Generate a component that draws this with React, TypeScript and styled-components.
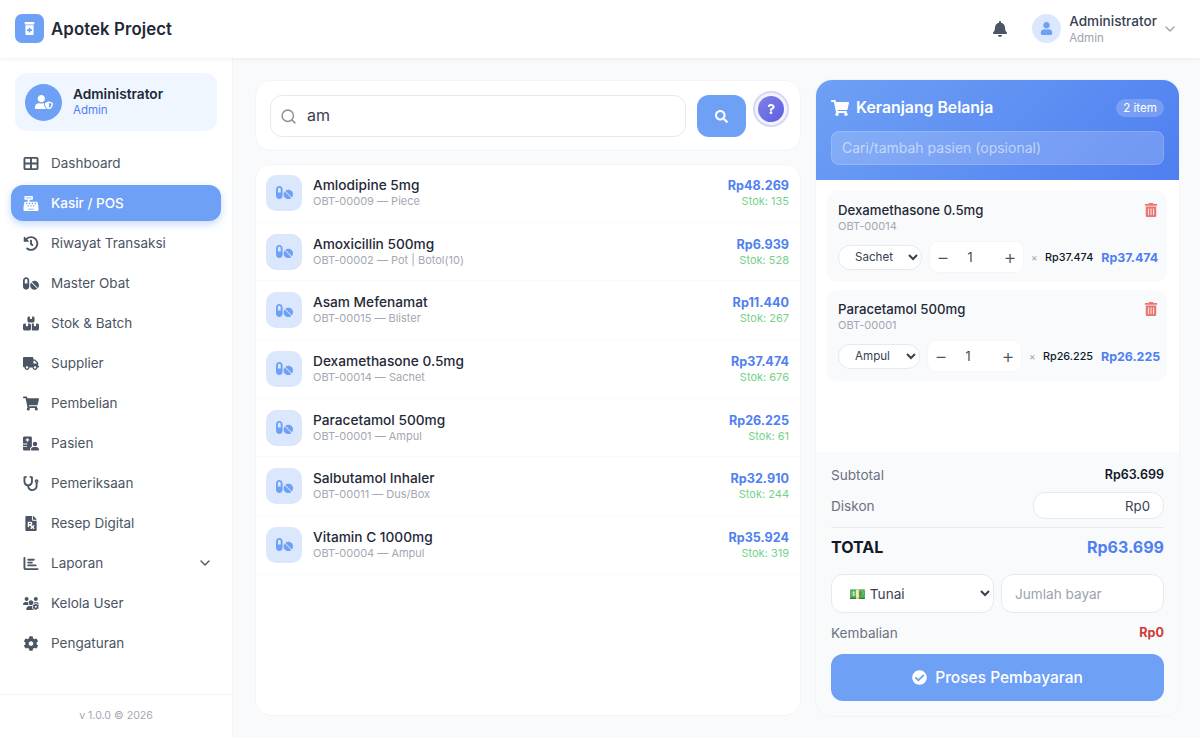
import React from "react";
import styled, { createGlobalStyle } from "styled-components";
import {
  FaBell,
  FaCashRegister,
  FaCheckCircle,
  FaCog,
  FaFilePrescription,
  FaHistory,
  FaPills,
  FaPrescriptionBottleAlt,
  FaQuestion,
  FaSearch,
  FaShoppingCart,
  FaStethoscope,
  FaTrashAlt,
  FaTruck,
  FaUser,
  FaUserShield,
} from "react-icons/fa";
import { FaBoxesStacked, FaChartBar, FaHospitalUser, FaTableCellsLarge, FaUsersGear } from "react-icons/fa6";
import { ChevronDown, Search } from "lucide-react";

const font = `"Inter", "Noto Sans", sans-serif`;

const GlobalStyle = createGlobalStyle`
  html, body {
    margin: 0;
    height: 100%;
    background: #f8fafc;
    font-family: ${font};
    color: #1f2937;
    overflow: hidden;
  }
  * { box-sizing: border-box; }
`;

const Page = styled.div`
  width: 1200px;
  height: 738px;
  display: flex;
  flex-direction: column;
`;
const Header = styled.header`
  height: 58px;
  flex: none;
  background: #fff;
  display: flex;
  align-items: center;
  padding: 0 22px 1px 15px;
  box-shadow: 0 1px 4px rgba(15, 23, 42, 0.07);
  position: relative;
`;
const LogoBox = styled.div`
  width: 29px;
  height: 29px;
  border-radius: 7px;
  background: #6ea0f5;
  color: #fff;
  font-size: 13px;
  display: flex;
  align-items: center;
  justify-content: center;
`;
const Brand = styled.div`
  margin-left: 7px;
  font-size: 16.8px;
  font-weight: 600;
  color: #1f2937;
  letter-spacing: 0.1px;
`;
const HeaderRight = styled.div`
  margin-left: auto;
  display: flex;
  align-items: center;
  color: #6b7280;
`;
const Bell = styled.div`
  font-size: 16px;
  color: #4b5563;
  display: flex;
  margin-right: 24px;
`;
const HeaderAvatar = styled.div`
  width: 29px;
  height: 29px;
  border-radius: 50%;
  background: #dbe7fd;
  color: #6ea0f5;
  font-size: 13px;
  display: flex;
  align-items: center;
  justify-content: center;
  margin-right: 8px;
`;
const HeaderUser = styled.div`
  display: flex;
  flex-direction: column;
  padding-top: 2px;
  margin-right: 5px;
`;
const HeaderName = styled.div`
  font-size: 13.6px;
  font-weight: 500;
  line-height: 17px;
  color: #374151;
`;
const HeaderRole = styled.div`
  font-size: 11.5px;
  line-height: 15px;
  margin-top: 1px;
  color: #9ca3af;
`;
const Body = styled.div`
  flex: 1;
  min-height: 0;
  display: flex;
`;
const Sidebar = styled.aside`
  width: 233px;
  flex: none;
  background: #fff;
  border-right: 1px solid #f1f5f9;
  display: flex;
  flex-direction: column;
`;
const UserCard = styled.div`
  margin: 15px 15px 0;
  height: 58px;
  border-radius: 12px;
  background: #eff6ff;
  display: flex;
  align-items: center;
  padding-left: 10px;
  gap: 11px;
`;
const UserAvatar = styled.div`
  width: 37px;
  height: 37px;
  border-radius: 50%;
  background: #6ea0f5;
  color: #fff;
  display: flex;
  align-items: center;
  justify-content: center;
  svg {
    width: 18px;
    height: 14.5px;
  }
`;
const UserName = styled.div`
  font-size: 13.7px;
  font-weight: 600;
  line-height: 17px;
  color: #1f2937;
`;
const UserRole = styled.div`
  font-size: 11.5px;
  line-height: 15px;
  color: #4f7ff0;
`;
const Nav = styled.nav`
  flex: 1;
  padding: 14px 11px 0;
  display: flex;
  flex-direction: column;
  gap: 4px;
`;
const NavItem = styled.a<{ $active?: boolean }>`
  height: 36px;
  flex: none;
  border-radius: 12px;
  display: flex;
  align-items: center;
  padding: 0 8px 0 12px;
  font-size: 13.5px;
  font-weight: ${(p) => (p.$active ? 500 : 400)};
  color: ${(p) => (p.$active ? "#fff" : "#4b5563")};
  background: ${(p) => (p.$active ? "#6ea0f5" : "transparent")};
  box-shadow: ${(p) => (p.$active ? "0 3px 8px rgba(110, 160, 245, 0.4)" : "none")};
`;
const NavIcon = styled.span`
  width: 16px;
  height: 16px;
  margin-right: 12px;
  display: flex;
  align-items: center;
  justify-content: center;
  svg {
    flex: none;
    width: 16px;
    height: 15px;
  }
`;
const NavChevron = styled.span`
  margin-left: auto;
  display: flex;
`;
const SideFooter = styled.div`
  height: 44px;
  flex: none;
  border-top: 1px solid #f3f4f6;
  padding-bottom: 2px;
  display: flex;
  align-items: center;
  justify-content: center;
  font-size: 10.6px;
  color: #a3a8b1;
`;
const Content = styled.main`
  flex: 1;
  min-width: 0;
  display: flex;
  gap: 15px;
  padding: 22px 21px 22px 22px;
`;
const LeftColumn = styled.div`
  width: 546px;
  flex: none;
  display: flex;
  flex-direction: column;
  gap: 13px;
`;
const SearchPanel = styled.div`
  position: relative;
  height: 71px;
  flex: none;
  background: #fff;
  border: 1px solid #f1f5f9;
  border-radius: 16px;
  padding: 14px;
  display: flex;
  gap: 11px;
`;
const SearchField = styled.div`
  width: 416px;
  height: 42px;
  border: 1px solid #e5e9f2;
  border-radius: 12px;
  display: flex;
  align-items: center;
  padding-left: 9px;
  gap: 10px;
  color: #8d939c;
`;
const SearchInput = styled.input`
  flex: 1;
  min-width: 0;
  border: 0;
  outline: 0;
  background: transparent;
  padding: 0 0 2px;
  font: 400 16px ${font};
  color: #374151;
`;
const SearchButton = styled.button`
  width: 49px;
  height: 42px;
  border: 0;
  border-radius: 12px;
  background: #6ea0f5;
  color: #fff;
  font-size: 13px;
  display: flex;
  align-items: center;
  justify-content: center;
`;
const HelpBubble = styled.div`
  position: absolute;
  left: 502px;
  top: 15px;
  width: 26px;
  height: 26px;
  border-radius: 50%;
  background: linear-gradient(135deg, #8180ea, #5b5fe0);
  color: #fff;
  font-size: 10px;
  display: flex;
  align-items: center;
  justify-content: center;
  box-shadow: 0 0 0 3px #f3f4fe, 0 0 0 5px #d6d7f8;
`;
const ProductList = styled.div`
  flex: 1;
  min-height: 0;
  background: #fff;
  box-shadow: inset 0 0 0 1px #f1f5f9;
  border-radius: 16px;
`;
const ProductRow = styled.div`
  height: 58.7px;
  display: flex;
  align-items: center;
  padding: 0 12px 0 11px;
  border-bottom: 1px solid #f8fafc;
`;
const ProductIcon = styled.div`
  width: 36px;
  height: 36px;
  border-radius: 10px;
  background: #dbe7fd;
  color: #6ea0f5;
  display: flex;
  align-items: center;
  justify-content: center;
  margin-right: 11px;
  svg {
    flex: none;
    width: 17px;
    height: 17px;
  }
`;
const ProductInfo = styled.div`
  flex: 1;
  min-width: 0;
`;
const ProductName = styled.div`
  font-size: 13.7px;
  font-weight: 500;
  line-height: 17px;
  color: #1f2937;
`;
const ProductMeta = styled.div`
  font-size: 11px;
  line-height: 15px;
  color: #a3a8b1;
`;
const ProductPrice = styled.div`
  font-size: 12.6px;
  font-weight: 700;
  line-height: 17px;
  text-align: right;
  color: #4f7ff0;
`;
const ProductStock = styled.div`
  font-size: 11px;
  line-height: 15px;
  text-align: right;
  color: #72d28a;
`;
const Cart = styled.section`
  width: 363px;
  flex: none;
  box-shadow: 0 0 0 1px #f1f5f9;
  border-radius: 16px;
  overflow: hidden;
  background: #fff;
  display: flex;
  flex-direction: column;
`;
const CartHeader = styled.div`
  height: 100px;
  flex: none;
  padding: 19px 15px 0;
  color: #fff;
  background: linear-gradient(135deg, #6ea0f5, #4f7ff0);
`;
const CartTitleRow = styled.div`
  height: 17px;
  display: flex;
  align-items: center;
  gap: 7px;
`;
const CartTitle = styled.div`
  font-size: 15.8px;
  font-weight: 600;
`;
const CountBadge = styled.span`
  margin-left: auto;
  height: 18px;
  width: 48px;
  border-radius: 9px;
  background: rgba(255, 255, 255, 0.2);
  font-size: 11.6px;
  display: flex;
  align-items: center;
  justify-content: center;
`;
const PatientInput = styled.input`
  display: block;
  width: 100%;
  height: 34px;
  margin-top: 15px;
  border: 1px solid rgba(255, 255, 255, 0.15);
  border-radius: 8px;
  background: rgba(255, 255, 255, 0.18);
  padding: 0 10px 1px;
  font: 400 14px ${font};
  outline: 0;
  &::placeholder {
    color: rgba(255, 255, 255, 0.55);
  }
`;
const CartItems = styled.div`
  flex: 1;
  min-height: 0;
  padding: 11px 12px 0 11px;
  display: flex;
  flex-direction: column;
  gap: 8px;
`;
const CartItem = styled.div`
  height: 91px;
  flex: none;
  background: #f8fafc;
  border-radius: 10px;
  padding: 11px 7px 0 11px;
`;
const ItemTop = styled.div`
  display: flex;
  justify-content: space-between;
  height: 40px;
`;
const ItemName = styled.div`
  font-size: 13.2px;
  font-weight: 500;
  line-height: 17px;
  color: #1f2937;
`;
const ItemCode = styled.div`
  font-size: 11px;
  line-height: 15px;
  color: #a3a8b1;
`;
const TrashButton = styled.span`
  color: #ea7672;
  font-size: 14px;
  margin: 1px 2px 0 0;
`;
const ItemControls = styled.div`
  display: flex;
  align-items: center;
  gap: 8px;
  height: 30px;
`;
const UnitSelect = styled.select<{ $w: number }>`
  width: ${(p) => p.$w}px;
  height: 25px;
  flex: none;
  border: 1px solid #e5e9f2;
  border-radius: 12px;
  background: #fff;
  padding-left: 12px;
  font: 400 11.6px ${font};
  color: #374151;
  outline: 0;
`;
const Stepper = styled.div`
  width: 93px;
  height: 30px;
  flex: none;
  background: #fff;
  border-radius: 8px;
  box-shadow: 0 0 0 1px #f5f6f9;
  display: flex;
  align-items: center;
`;
const StepButton = styled.button`
  width: 26px;
  height: 30px;
  border: 0;
  background: transparent;
  padding: 0;
  font: 300 20px ${font};
  color: #4b5563;
`;
const StepValue = styled.span`
  flex: 1;
  padding-right: 13px;
  text-align: center;
  font-size: 12.5px;
  color: #374151;
`;
const Times = styled.span`
  font-size: 10px;
  color: #9ca3af;
  width: 6px;
  flex: none;
`;
const UnitPrice = styled.span`
  font-size: 10.8px;
  font-weight: 500;
  color: #111827;
  flex: none;
`;
const LineTotal = styled.span`
  font-size: 12.4px;
  font-weight: 700;
  color: #4f7ff0;
  flex: none;
`;
const Summary = styled.div`
  height: 264px;
  flex: none;
  background: #f8fafc;
  padding: 11px 15px 0;
`;
const SummaryRow = styled.div`
  display: flex;
  align-items: center;
  justify-content: space-between;
  height: 23px;
`;
const DiscountRow = styled(SummaryRow)`
  height: 27px;
  margin-top: 6px;
`;
const SummaryLabel = styled.span`
  font-size: 13.6px;
  color: #6b7280;
`;
const SummaryValue = styled.span`
  font-size: 12.5px;
  font-weight: 600;
  color: #111827;
`;
const DiscountInput = styled.input`
  width: 131px;
  height: 27px;
  border: 1px solid #e5e9f2;
  border-radius: 12px;
  background: #fff;
  padding: 0 13px;
  text-align: right;
  font: 400 13.2px ${font};
  color: #374151;
  outline: 0;
`;
const TotalRow = styled.div`
  margin-top: 8px;
  height: 39px;
  border-top: 1px solid #e7eaf0;
  display: flex;
  align-items: center;
  justify-content: space-between;
`;
const TotalLabel = styled.span`
  font-size: 16px;
  font-weight: 700;
  color: #111827;
`;
const TotalValue = styled.span`
  font-size: 16px;
  font-weight: 700;
  color: #4f7ff0;
`;
const PayRow = styled.div`
  display: flex;
  gap: 7px;
  margin-top: 8px;
`;
const PaySelect = styled.select`
  width: 163px;
  height: 39px;
  border: 1px solid #e5e9f2;
  border-radius: 12px;
  background: #fff;
  padding-left: 13px;
  font: 400 13.6px ${font};
  color: #374151;
  outline: 0;
`;
const PayInput = styled.input`
  width: 163px;
  height: 39px;
  border: 1px solid #e5e9f2;
  border-radius: 12px;
  background: #fff;
  padding: 0 13px;
  font: 400 13.6px ${font};
  outline: 0;
  &::placeholder {
    color: #9ca3af;
  }
`;
const ChangeRow = styled(SummaryRow)`
  margin-top: 8px;
`;
const ChangeValue = styled.span`
  font-size: 12.6px;
  font-weight: 700;
  color: #cf3a32;
`;
const PayButton = styled.button`
  width: 100%;
  height: 47px;
  margin-top: 10px;
  border: 0;
  border-radius: 12px;
  background: #6ea0f5;
  color: #fff;
  font: 500 15.5px ${font};
  display: flex;
  align-items: center;
  justify-content: center;
  gap: 8px;
`;

const navItems = [
  { label: "Dashboard", icon: <FaTableCellsLarge /> },
  { label: "Kasir / POS", icon: <FaCashRegister />, active: true },
  { label: "Riwayat Transaksi", icon: <FaHistory /> },
  { label: "Master Obat", icon: <FaPills /> },
  { label: "Stok & Batch", icon: <FaBoxesStacked /> },
  { label: "Supplier", icon: <FaTruck /> },
  { label: "Pembelian", icon: <FaShoppingCart /> },
  { label: "Pasien", icon: <FaHospitalUser /> },
  { label: "Pemeriksaan", icon: <FaStethoscope /> },
  { label: "Resep Digital", icon: <FaFilePrescription /> },
  { label: "Laporan", icon: <FaChartBar />, more: true },
  { label: "Kelola User", icon: <FaUsersGear /> },
  { label: "Pengaturan", icon: <FaCog /> },
];

const products = [
  { name: "Amlodipine 5mg", meta: "OBT-00009 — Piece", price: "Rp48.269", stock: 135 },
  { name: "Amoxicillin 500mg", meta: "OBT-00002 — Pot | Botol(10)", price: "Rp6.939", stock: 528 },
  { name: "Asam Mefenamat", meta: "OBT-00015 — Blister", price: "Rp11.440", stock: 267 },
  { name: "Dexamethasone 0.5mg", meta: "OBT-00014 — Sachet", price: "Rp37.474", stock: 676 },
  { name: "Paracetamol 500mg", meta: "OBT-00001 — Ampul", price: "Rp26.225", stock: 61 },
  { name: "Salbutamol Inhaler", meta: "OBT-00011 — Dus/Box", price: "Rp32.910", stock: 244 },
  { name: "Vitamin C 1000mg", meta: "OBT-00004 — Ampul", price: "Rp35.924", stock: 319 },
];

const cartItems = [
  { name: "Dexamethasone 0.5mg", code: "OBT-00014", unit: "Sachet", width: 84, price: "Rp37.474" },
  { name: "Paracetamol 500mg", code: "OBT-00001", unit: "Ampul", width: 82, price: "Rp26.225" },
];

export default function App() {
  return (
    <Page>
      <GlobalStyle />
      <Header>
        <LogoBox>
          <FaPrescriptionBottleAlt />
        </LogoBox>
        <Brand>Apotek Project</Brand>
        <HeaderRight>
          <Bell>
            <FaBell />
          </Bell>
          <HeaderAvatar>
            <FaUser />
          </HeaderAvatar>
          <HeaderUser>
            <HeaderName>Administrator</HeaderName>
            <HeaderRole>Admin</HeaderRole>
          </HeaderUser>
          <ChevronDown size={16} color="#9ca3af" />
        </HeaderRight>
      </Header>
      <Body>
        <Sidebar>
          <UserCard>
            <UserAvatar>
              <FaUserShield />
            </UserAvatar>
            <div>
              <UserName>Administrator</UserName>
              <UserRole>Admin</UserRole>
            </div>
          </UserCard>
          <Nav>
            {navItems.map((item) => (
              <NavItem key={item.label} $active={item.active}>
                <NavIcon>{item.icon}</NavIcon>
                {item.label}
                {item.more && (
                  <NavChevron>
                    <ChevronDown size={16} />
                  </NavChevron>
                )}
              </NavItem>
            ))}
          </Nav>
          <SideFooter>v 1.0.0 © 2026</SideFooter>
        </Sidebar>
        <Content>
          <LeftColumn>
            <SearchPanel>
              <SearchField>
                <Search size={17} strokeWidth={2.2} />
                <SearchInput defaultValue="am" />
              </SearchField>
              <SearchButton>
                <FaSearch />
              </SearchButton>
              <HelpBubble>
                <FaQuestion />
              </HelpBubble>
            </SearchPanel>
            <ProductList>
              {products.map((p) => (
                <ProductRow key={p.name}>
                  <ProductIcon>
                    <FaPills />
                  </ProductIcon>
                  <ProductInfo>
                    <ProductName>{p.name}</ProductName>
                    <ProductMeta>{p.meta}</ProductMeta>
                  </ProductInfo>
                  <div>
                    <ProductPrice>{p.price}</ProductPrice>
                    <ProductStock>Stok: {p.stock}</ProductStock>
                  </div>
                </ProductRow>
              ))}
            </ProductList>
          </LeftColumn>
          <Cart>
            <CartHeader>
              <CartTitleRow>
                <FaShoppingCart size={18} />
                <CartTitle>Keranjang Belanja</CartTitle>
                <CountBadge>2 item</CountBadge>
              </CartTitleRow>
              <PatientInput placeholder="Cari/tambah pasien (opsional)" />
            </CartHeader>
            <CartItems>
              {cartItems.map((item) => (
                <CartItem key={item.code}>
                  <ItemTop>
                    <div>
                      <ItemName>{item.name}</ItemName>
                      <ItemCode>{item.code}</ItemCode>
                    </div>
                    <TrashButton>
                      <FaTrashAlt />
                    </TrashButton>
                  </ItemTop>
                  <ItemControls>
                    <UnitSelect $w={item.width} defaultValue={item.unit}>
                      <option>{item.unit}</option>
                    </UnitSelect>
                    <Stepper>
                      <StepButton>−</StepButton>
                      <StepValue>1</StepValue>
                      <StepButton>+</StepButton>
                    </Stepper>
                    <Times>×</Times>
                    <UnitPrice>{item.price}</UnitPrice>
                    <LineTotal>{item.price}</LineTotal>
                  </ItemControls>
                </CartItem>
              ))}
            </CartItems>
            <Summary>
              <SummaryRow>
                <SummaryLabel>Subtotal</SummaryLabel>
                <SummaryValue>Rp63.699</SummaryValue>
              </SummaryRow>
              <DiscountRow>
                <SummaryLabel>Diskon</SummaryLabel>
                <DiscountInput defaultValue="Rp0" />
              </DiscountRow>
              <TotalRow>
                <TotalLabel>TOTAL</TotalLabel>
                <TotalValue>Rp63.699</TotalValue>
              </TotalRow>
              <PayRow>
                <PaySelect defaultValue="tunai">
                  <option value="tunai">💵 Tunai</option>
                </PaySelect>
                <PayInput placeholder="Jumlah bayar" />
              </PayRow>
              <ChangeRow>
                <SummaryLabel>Kembalian</SummaryLabel>
                <ChangeValue>Rp0</ChangeValue>
              </ChangeRow>
              <PayButton>
                <FaCheckCircle size={15} />
                Proses Pembayaran
              </PayButton>
            </Summary>
          </Cart>
        </Content>
      </Body>
    </Page>
  );
}
